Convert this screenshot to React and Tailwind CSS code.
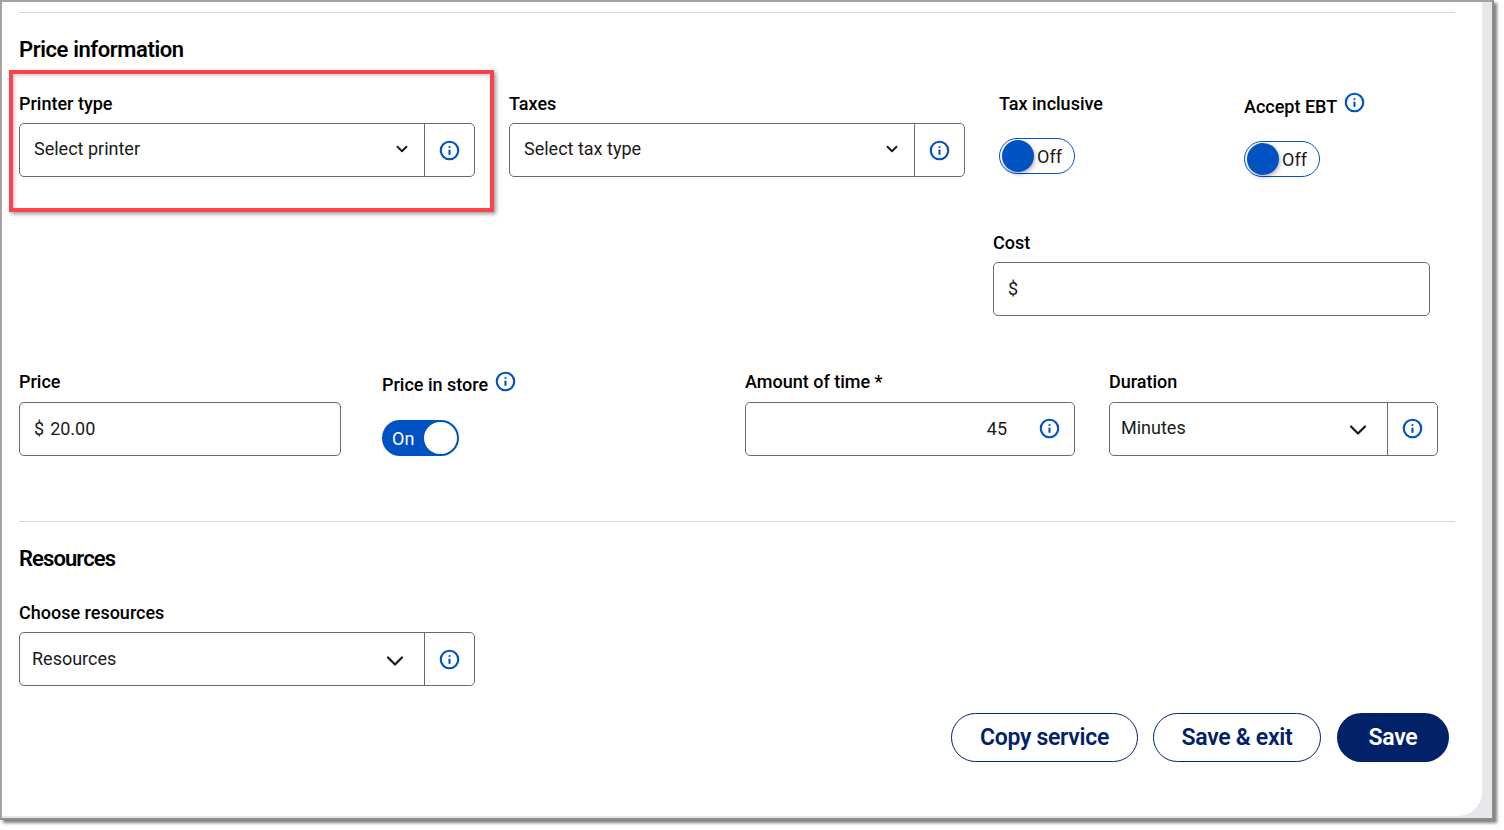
import { ChevronDown, Info } from "lucide-react";

function Label({ children, className = "" }) {
  return <label className={`block text-[18px] leading-[24px] font-medium text-black ${className}`}>{children}</label>;
}

function InfoIcon({ className = "" }) {
  return <Info size={21} strokeWidth={2.4} className={`text-[#0052c2] shrink-0 ${className}`} />;
}

function SelectBox({ text, textClass = "pl-[14px] pb-[3px]", chevron = 18, chevronClass = "mr-[13px] -mt-[2px]", selectWidth = "w-[405px]", width = "w-[456px]", iconClass = "" }) {
  return (
    <div className={`${width} h-[54px] flex border border-[#6b6b6b] rounded-[5px] bg-white`}>
      <div className={`${selectWidth} h-full flex items-center justify-between border-r border-[#6b6b6b]`}>
        <span className={`text-[18px] text-[#1a1a1a] ${textClass}`}>{text}</span>
        <ChevronDown size={chevron} strokeWidth={chevron > 20 ? 1.9 : 2.5} className={`text-[#1a1a1a] ${chevronClass}`} />
      </div>
      <div className="flex-1 flex items-center justify-center">
        <InfoIcon className={iconClass} />
      </div>
    </div>
  );
}

function ToggleOff() {
  return (
    <div className="w-[76px] h-[36px] flex items-center rounded-full border border-[#0052c2] bg-white pl-[2px]">
      <div className="w-[32px] h-[32px] rounded-full bg-[#0052c2] shadow-[1px_2px_4px_rgba(0,0,0,0.3)]" />
      <span className="ml-[3px] text-[18px] text-[#1a1a1a]">Off</span>
    </div>
  );
}

export default function App() {
  return (
    <div className="w-[1504px] h-[830px] bg-white" style={{ fontFamily: "Roboto, sans-serif" }}>
      <div className="relative w-[1494px] h-[820px] flex bg-[#e6e7eb] border-2 border-[#a3a3a3] border-r-[#8c8c8c] border-b-[#8c8c8c] shadow-[3px_3px_3px_rgba(0,0,0,0.5)]">
        <div className="w-[1480px] h-[814px] bg-white rounded-br-[24px] pl-[17px] pt-[10px]">
          <div className="w-[1436px] border-t border-[#d6d6d6]" />

          <h2 className="mt-[22px] text-[22px] leading-[30px] font-semibold text-black tracking-[-0.4px]">Price information</h2>

          <div className="mt-[10px] flex h-[105px]">
            <div className="w-[490px] pt-[17px]">
              <Label className="mb-[7px]">Printer type</Label>
              <SelectBox text="Select printer" />
            </div>
            <div className="w-[490px] pt-[17px]">
              <Label className="mb-[7px]">Taxes</Label>
              <SelectBox text="Select tax type" />
            </div>
            <div className="w-[245px] pt-[17px]">
              <Label className="mb-[22px]">Tax inclusive</Label>
              <ToggleOff />
            </div>
            <div className="pt-[15px]">
              <div className="flex items-start gap-[7px] mb-[22px] pt-[5px]">
                <Label>Accept EBT</Label>
                <InfoIcon className="-mt-[3px]" />
              </div>
              <ToggleOff />
            </div>
          </div>

          <div className="mt-[51px] ml-[974px]">
            <Label className="mb-[7px]">Cost</Label>
            <div className="w-[437px] h-[54px] flex items-center border border-[#6b6b6b] rounded-[5px] pl-[14px] pb-[2px] text-[18px] text-[#1a1a1a]">$</div>
          </div>

          <div className="mt-[54px] flex h-[84px]">
            <div className="w-[363px]">
              <Label className="mb-[8px]">Price</Label>
              <div className="w-[322px] h-[54px] flex items-center gap-[6px] border border-[#6b6b6b] rounded-[5px] pl-[14px] pb-[2px] text-[18px] text-[#1a1a1a]">
                <span>$</span>
                <span>20.00</span>
              </div>
            </div>
            <div className="w-[363px]">
              <div className="flex items-start gap-[7px] mb-[23px] pt-[3px]">
                <Label>Price in store</Label>
                <InfoIcon className="-mt-[2px]" />
              </div>
              <div className="w-[77px] h-[36px] flex items-center justify-between rounded-full bg-[#0052c2] pl-[10px] pr-[2px]">
                <span className="text-[18px] text-white">On</span>
                <div className="w-[33px] h-[32px] rounded-full bg-white" />
              </div>
            </div>
            <div className="w-[364px]">
              <Label className="mb-[8px]">Amount of time *</Label>
              <div className="w-[330px] h-[54px] flex items-center justify-end border border-[#6b6b6b] rounded-[5px] pr-[14px] text-[18px] text-[#1a1a1a]">
                <span className="mr-[32px] pb-[1px]">45</span>
                <InfoIcon className="-mt-[2px]" />
              </div>
            </div>
            <div>
              <Label className="mb-[8px]">Duration</Label>
              <SelectBox text="Minutes" textClass="pl-[11px] pb-[3px]" chevron={28} chevronClass="mr-[15px] mt-[2px]" selectWidth="w-[278px]" width="w-[329px]" iconClass="-mt-[2px]" />
            </div>
          </div>

          <div className="mt-[67px] w-[1436px] border-t border-[#d6d6d6]" />

          <h2 className="mt-[22px] text-[22px] leading-[30px] font-semibold text-black tracking-[-0.9px]">Resources</h2>

          <Label className="mt-[27px] mb-[7px]">Choose resources</Label>
          <SelectBox text="Resources" textClass="pl-[12px] pb-[1px]" chevron={28} chevronClass="mr-[15px] mt-[3px]" />

          <div className="mt-[27px] w-[1430px] flex justify-end gap-[15px]">
            <button className="w-[187px] h-[49px] pt-[2px] rounded-full border border-[#012169] text-[23px] font-semibold text-[#012169] tracking-[-0.3px]">Copy service</button>
            <button className="w-[168px] h-[49px] pt-[2px] mr-[1px] rounded-full border border-[#012169] text-[23px] font-semibold text-[#012169] tracking-[-0.3px]">Save &amp; exit</button>
            <button className="w-[112px] h-[49px] pt-[2px] rounded-full bg-[#012169] text-[23px] font-semibold text-white tracking-[-0.3px]">Save</button>
          </div>
        </div>

        <div className="absolute left-[7px] top-[68px] w-[485px] h-[142px] border-[4px] border-[#f9444a] shadow-[2px_2px_4px_rgba(0,0,0,0.4),inset_2px_2px_3px_rgba(0,0,0,0.18)]" />
      </div>
    </div>
  );
}
